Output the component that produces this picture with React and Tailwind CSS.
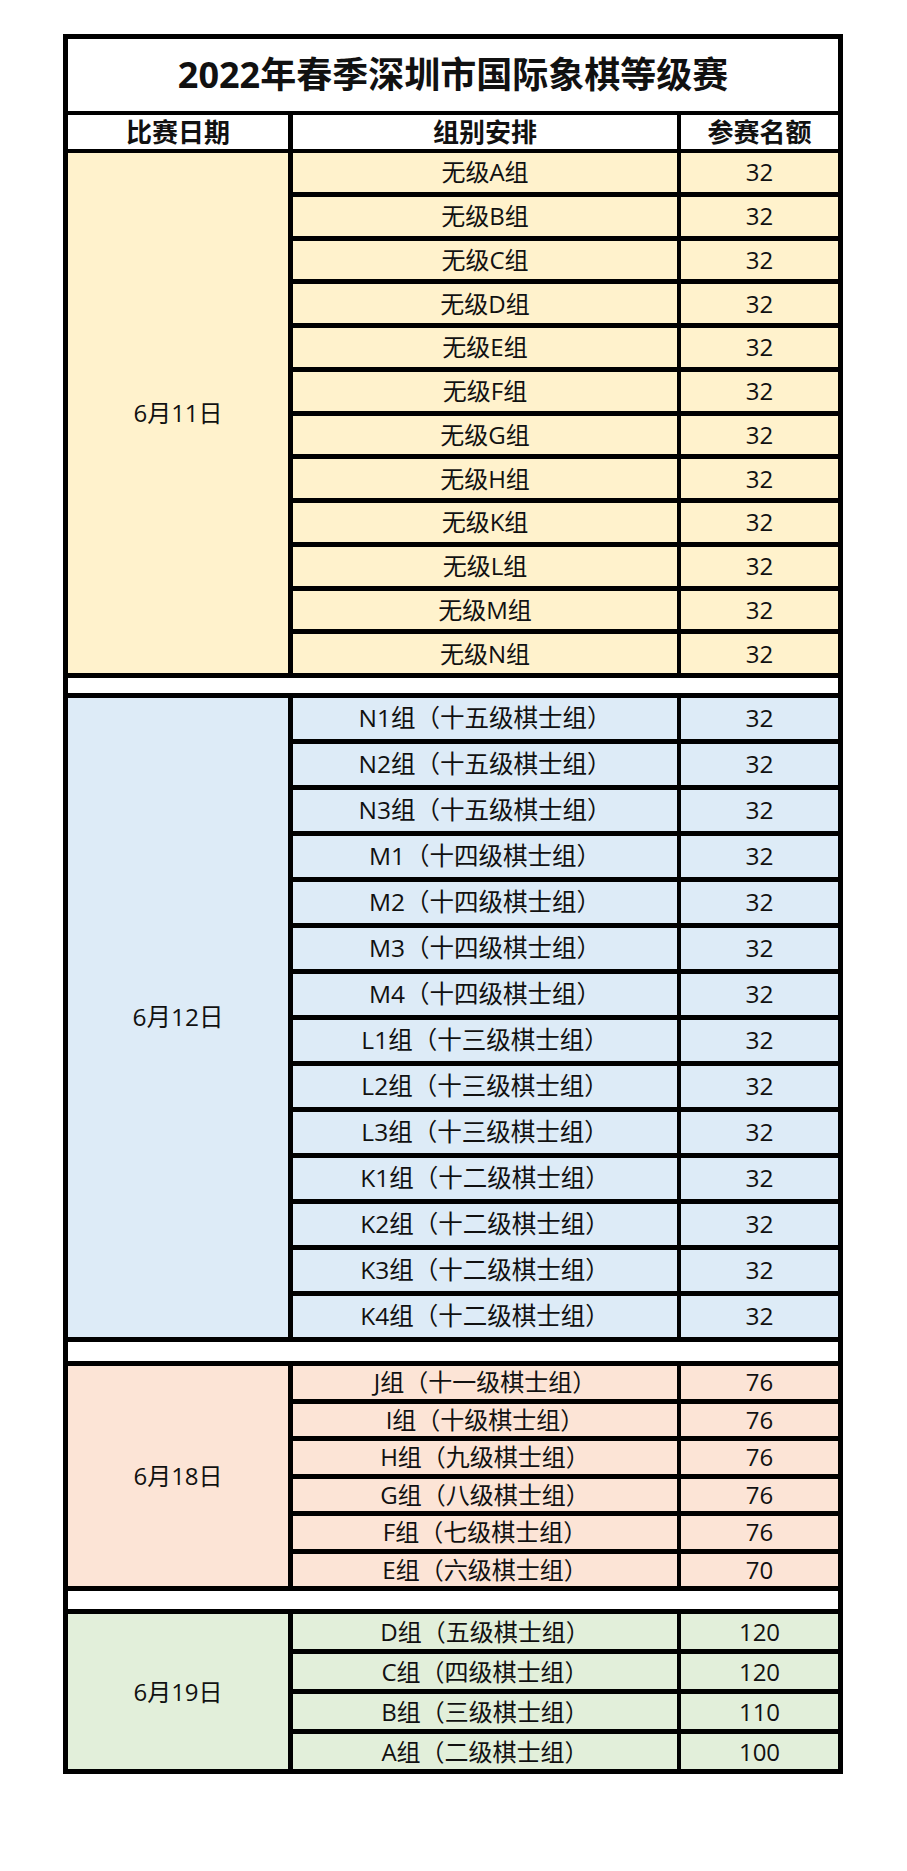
import React from "react";

const FONT = { fontFamily: '"Open Sans", "Noto Sans CJK SC", sans-serif' };

const sections = [
  {
    date: "6月11日",
    bg: "bg-[#fff2cc]",
    rowH: "h-[38.75px]",
    text: "text-[24px]",
    rows: [
      ["无级A组", "32"],
      ["无级B组", "32"],
      ["无级C组", "32"],
      ["无级D组", "32"],
      ["无级E组", "32"],
      ["无级F组", "32"],
      ["无级G组", "32"],
      ["无级H组", "32"],
      ["无级K组", "32"],
      ["无级L组", "32"],
      ["无级M组", "32"],
      ["无级N组", "32"],
    ],
  },
  {
    date: "6月12日",
    bg: "bg-[#ddebf7]",
    rowH: "h-[41px]",
    text: "text-[24.5px]",
    rows: [
      ["N1组（十五级棋士组）", "32"],
      ["N2组（十五级棋士组）", "32"],
      ["N3组（十五级棋士组）", "32"],
      ["M1（十四级棋士组）", "32"],
      ["M2（十四级棋士组）", "32"],
      ["M3（十四级棋士组）", "32"],
      ["M4（十四级棋士组）", "32"],
      ["L1组（十三级棋士组）", "32"],
      ["L2组（十三级棋士组）", "32"],
      ["L3组（十三级棋士组）", "32"],
      ["K1组（十二级棋士组）", "32"],
      ["K2组（十二级棋士组）", "32"],
      ["K3组（十二级棋士组）", "32"],
      ["K4组（十二级棋士组）", "32"],
    ],
  },
  {
    date: "6月18日",
    bg: "bg-[#fce4d6]",
    rowH: "h-[32.5px]",
    text: "text-[24px]",
    rows: [
      ["J组（十一级棋士组）", "76"],
      ["I组（十级棋士组）", "76"],
      ["H组（九级棋士组）", "76"],
      ["G组（八级棋士组）", "76"],
      ["F组（七级棋士组）", "76"],
      ["E组（六级棋士组）", "70"],
    ],
  },
  {
    date: "6月19日",
    bg: "bg-[#e2efda]",
    rowH: "h-[35px]",
    text: "text-[24px]",
    rows: [
      ["D组（五级棋士组）", "120"],
      ["C组（四级棋士组）", "120"],
      ["B组（三级棋士组）", "110"],
      ["A组（二级棋士组）", "100"],
    ],
  },
];

const gaps = ["h-[15px]", "h-[19px]", "h-[18px]"];

function Section({ s }) {
  return (
    <div className={`flex ${s.bg} text-[#111] leading-none`}>
      <div className={`w-[220px] shrink-0 flex items-center justify-center ${s.text}`}>{s.date}</div>
      <div className="w-[5px] shrink-0 bg-black" />
      <div className="flex-1 flex flex-col">
        {s.rows.map((r, i) => (
          <React.Fragment key={i}>
            {i > 0 && <div className="h-[5px] bg-black" />}
            <div className={`flex ${s.rowH}`}>
              <div className={`w-[384px] shrink-0 flex items-center justify-center ${s.text} whitespace-nowrap`}>{r[0]}</div>
              <div className="w-[4px] shrink-0 bg-black" />
              <div className={`flex-1 flex items-center justify-center ${s.text}`}>{r[1]}</div>
            </div>
          </React.Fragment>
        ))}
      </div>
    </div>
  );
}

export default function App() {
  return (
    <div className="w-[907px] h-[1871px] bg-white pt-[34px] pl-[63px]" style={FONT}>
      <div className="w-[780px] border-[5px] border-black">
        <div className="h-[72px] flex items-center justify-center text-[36px] font-bold text-[#111] leading-none">
          2022年春季深圳市国际象棋等级赛
        </div>
        <div className="h-[4px] bg-black" />
        <div className="h-[34px] flex text-[26px] font-bold text-[#111] leading-none">
          <div className="w-[220px] shrink-0 flex items-center justify-center">比赛日期</div>
          <div className="w-[5px] shrink-0 bg-black" />
          <div className="w-[384px] shrink-0 flex items-center justify-center">组别安排</div>
          <div className="w-[4px] shrink-0 bg-black" />
          <div className="flex-1 flex items-center justify-center">参赛名额</div>
        </div>
        {sections.map((s, i) => (
          <React.Fragment key={i}>
            {i === 0 && <div className="h-[4px] bg-black" />}
            {i > 0 && (
              <>
                <div className="h-[5px] bg-black" />
                <div className={`${gaps[i - 1]} bg-white`} />
                <div className="h-[5px] bg-black" />
              </>
            )}
            <Section s={s} />
          </React.Fragment>
        ))}
      </div>
    </div>
  );
}
